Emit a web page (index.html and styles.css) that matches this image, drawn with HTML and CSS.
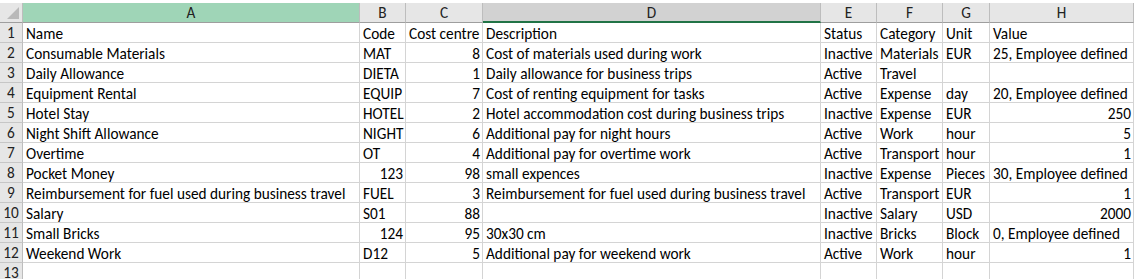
FILE: index.html
```html
<!DOCTYPE html>
<html>
<head>
<meta charset="utf-8">
<link rel="stylesheet" href="styles.css">
</head>
<body>
<div class="sheet">
  <div class="topstrip"></div>
  <div class="row head">
    <div class="corner"><span class="tri"></span></div>
    <div class="ch sel-col">A</div>
    <div class="ch">B</div>
    <div class="ch">C</div>
    <div class="ch sel-cell">D</div>
    <div class="ch">E</div>
    <div class="ch">F</div>
    <div class="ch">G</div>
    <div class="ch">H</div>
    <div class="blank"></div>
  </div>

  <div class="row"><div class="rh">1</div><div class="c">Name</div><div class="c">Code</div><div class="c">Cost centre</div><div class="c">Description</div><div class="c">Status</div><div class="c">Category</div><div class="c">Unit</div><div class="c">Value</div><div class="blank"></div></div>
  <div class="row"><div class="rh">2</div><div class="c">Consumable Materials</div><div class="c">MAT</div><div class="c n">8</div><div class="c">Cost of materials used during work</div><div class="c">Inactive</div><div class="c">Materials</div><div class="c">EUR</div><div class="c">25, Employee defined</div><div class="blank"></div></div>
  <div class="row"><div class="rh">3</div><div class="c">Daily Allowance</div><div class="c">DIETA</div><div class="c n">1</div><div class="c">Daily allowance for business trips</div><div class="c">Active</div><div class="c">Travel</div><div class="c"></div><div class="c"></div><div class="blank"></div></div>
  <div class="row"><div class="rh">4</div><div class="c">Equipment Rental</div><div class="c">EQUIP</div><div class="c n">7</div><div class="c">Cost of renting equipment for tasks</div><div class="c">Active</div><div class="c">Expense</div><div class="c">day</div><div class="c">20, Employee defined</div><div class="blank"></div></div>
  <div class="row"><div class="rh">5</div><div class="c">Hotel Stay</div><div class="c">HOTEL</div><div class="c n">2</div><div class="c">Hotel accommodation cost during business trips</div><div class="c">Inactive</div><div class="c">Expense</div><div class="c">EUR</div><div class="c n">250</div><div class="blank"></div></div>
  <div class="row"><div class="rh">6</div><div class="c">Night Shift Allowance</div><div class="c">NIGHT</div><div class="c n">6</div><div class="c">Additional pay for night hours</div><div class="c">Active</div><div class="c">Work</div><div class="c">hour</div><div class="c n">5</div><div class="blank"></div></div>
  <div class="row"><div class="rh">7</div><div class="c">Overtime</div><div class="c">OT</div><div class="c n">4</div><div class="c">Additional pay for overtime work</div><div class="c">Active</div><div class="c">Transport</div><div class="c">hour</div><div class="c n">1</div><div class="blank"></div></div>
  <div class="row"><div class="rh">8</div><div class="c">Pocket Money</div><div class="c n">123</div><div class="c n">98</div><div class="c">small expences</div><div class="c">Inactive</div><div class="c">Expense</div><div class="c">Pieces</div><div class="c">30, Employee defined</div><div class="blank"></div></div>
  <div class="row"><div class="rh">9</div><div class="c">Reimbursement for fuel used during business travel</div><div class="c">FUEL</div><div class="c n">3</div><div class="c">Reimbursement for fuel used during business travel</div><div class="c">Active</div><div class="c">Transport</div><div class="c">EUR</div><div class="c n">1</div><div class="blank"></div></div>
  <div class="row"><div class="rh">10</div><div class="c">Salary</div><div class="c">S01</div><div class="c n">88</div><div class="c"></div><div class="c">Inactive</div><div class="c">Salary</div><div class="c">USD</div><div class="c n">2000</div><div class="blank"></div></div>
  <div class="row"><div class="rh">11</div><div class="c">Small Bricks</div><div class="c n">124</div><div class="c n">95</div><div class="c">30x30 cm</div><div class="c">Inactive</div><div class="c">Bricks</div><div class="c">Block</div><div class="c">0, Employee defined</div><div class="blank"></div></div>
  <div class="row"><div class="rh">12</div><div class="c">Weekend Work</div><div class="c">D12</div><div class="c n">5</div><div class="c">Additional pay for weekend work</div><div class="c">Active</div><div class="c">Work</div><div class="c">hour</div><div class="c n">1</div><div class="blank"></div></div>
  <div class="row"><div class="rh">13</div><div class="c"></div><div class="c"></div><div class="c"></div><div class="c"></div><div class="c"></div><div class="c"></div><div class="c"></div><div class="c"></div><div class="blank"></div></div>
</div>
</body>
</html>
```

FILE: styles.css
```css
html, body {
  margin: 0;
  padding: 0;
  background: #ffffff;
}
body {
  width: 1138px;
  height: 279px;
  overflow: hidden;
  font-family: "Carlito", "Lato", "Liberation Sans", sans-serif;
  font-size: 15.3px;
  color: #000;
}
.sheet {
  display: flex;
  flex-direction: column;
}
.topstrip {
  height: 3px;
  background: #ffffff;
}
.row {
  display: grid;
  grid-template-columns: 23px 337px 46px 77px 338px 56px 66px 47px 144px 1fr;
  height: 20px;
}
.row > div {
  box-sizing: border-box;
  height: 20px;
  border-right: 1px solid #d4d4d4;
  border-bottom: 1px solid #d4d4d4;
  white-space: nowrap;
  overflow: hidden;
}
.row > .blank {
  border: none;
  background: #fff;
}
.head > div {
  background: #e6e6e6;
  border-right: 1px solid #bdbdbd;
  border-bottom: 1px solid #9e9e9e;
  text-align: center;
  line-height: 19px;
  color: #222;
}
.head > .blank {
  background: #fff;
  border: none;
}
.corner {
  position: relative;
}
.tri {
  position: absolute;
  right: 3px;
  bottom: 3px;
  width: 0;
  height: 0;
  border-left: 12px solid transparent;
  border-bottom: 12px solid #b9b9b9;
}
.head > .sel-col {
  background: #9fd5b7;
}
.head > .sel-cell {
  background: #d2d2d2;
  border-bottom: 2px solid #217346;
}
.rh {
  background: #e6e6e6;
  text-align: center;
  color: #222;
  line-height: 20px;
  border-right-color: #bdbdbd !important;
  border-bottom-color: #c6c6c6 !important;
}
.c {
  padding: 0 2px 0 3px;
  line-height: 21px;
}
.c.n {
  text-align: right;
}
```
